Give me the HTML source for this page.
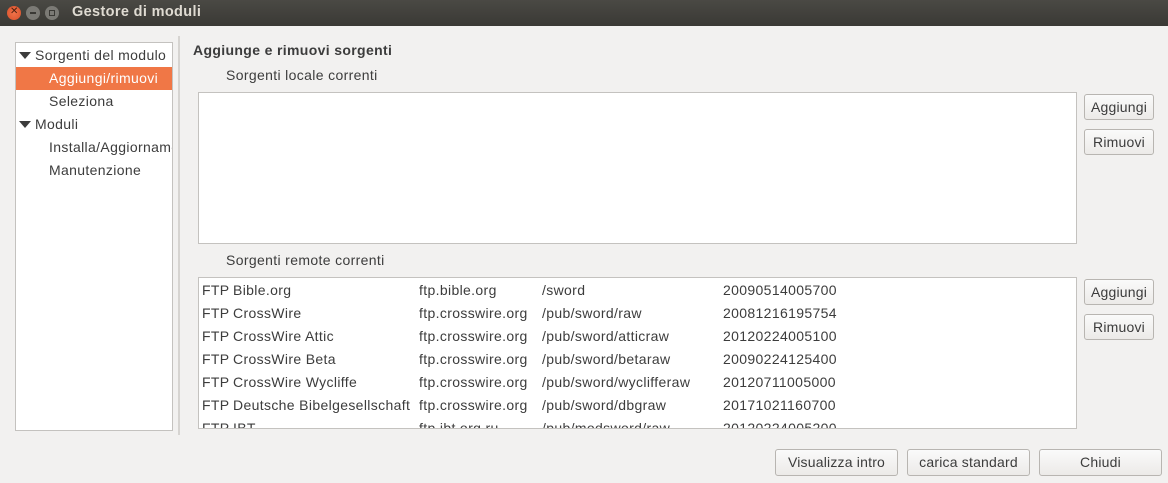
<!DOCTYPE html>
<html><head><style>
*{margin:0;padding:0;box-sizing:border-box}
body{width:1168px;height:483px;background:#f2f1f0;font-family:"Liberation Sans",sans-serif;font-size:14px;letter-spacing:0.35px;color:#3c3c3c;position:relative;overflow:hidden}
.t{position:absolute;white-space:nowrap}
#title{position:absolute;left:0;top:0;width:1168px;height:26px;background:linear-gradient(#4a4944,#3a3935);}
.wb{position:absolute;top:6px;width:14px;height:14px;border-radius:50%}
.box{position:absolute;background:#fff;border:1px solid #c4c2bf}
.btn{position:absolute;border:1px solid #b8b5b1;border-radius:3px;background:linear-gradient(#fafafa,#eceae8);text-align:center;line-height:24px;color:#3c3c3c;letter-spacing:0.2px}
.row{position:absolute;left:0;height:23px;line-height:23px;white-space:nowrap}
.tri{display:inline-block;width:0;height:0;border-left:6px solid transparent;border-right:6px solid transparent;border-top:7px solid #3c3c3c;margin-right:4px;vertical-align:1px}
</style></head><body>
<div id="title">
<div class="wb" style="left:7px;background:radial-gradient(#f0734a,#d9502a);"><span class="t" style="left:3px;top:0px;font-size:10px;color:#4a2010;letter-spacing:0">✕</span></div>
<div class="wb" style="left:26px;background:#7b7a75;"><span class="t" style="left:4px;top:6px;width:6px;height:2px;background:#3a3935"></span></div>
<div class="wb" style="left:45px;background:#7b7a75;"><span class="t" style="left:4px;top:4px;width:6px;height:6px;border:1px solid #3a3935"></span></div>
<span class="t" style="left:72px;top:4px;color:#dfdbd2;font-weight:bold;font-size:14.5px;">Gestore di moduli</span>
</div>
<div class="box" style="left:15px;top:42px;width:158px;height:389px;overflow:hidden">
<div class="row" style="top:1px;left:3px"><span class="tri"></span>Sorgenti del modulo</div>
<div class="row" style="top:24px;width:158px;background:#f07746;color:#fff;padding-left:33px">Aggiungi/rimuovi</div>
<div class="row" style="top:47px;left:33px">Seleziona</div>
<div class="row" style="top:70px;left:3px"><span class="tri"></span>Moduli</div>
<div class="row" style="top:93px;left:33px">Installa/Aggiornamento</div>
<div class="row" style="top:116px;left:33px">Manutenzione</div>
</div>
<div style="position:absolute;left:178px;top:36px;width:2px;height:399px;background:#d6d4d1"></div>
<span class="t" style="left:193px;top:42px;font-weight:bold">Aggiunge e rimuovi sorgenti</span>
<span class="t" style="left:226px;top:67px">Sorgenti locale correnti</span>
<div class="box" style="left:198px;top:92px;width:879px;height:152px"></div>
<span class="t" style="left:226px;top:252px">Sorgenti remote correnti</span>
<div class="box" style="left:198px;top:277px;width:879px;height:152px;overflow:hidden">
<div style="position:absolute;left:3px;top:1px">
<div class="row" style="top:0">FTP</div><div class="row" style="top:23px">FTP</div><div class="row" style="top:46px">FTP</div><div class="row" style="top:69px">FTP</div><div class="row" style="top:92px">FTP</div><div class="row" style="top:115px">FTP</div><div class="row" style="top:138px">FTP</div>
</div>
<div style="position:absolute;left:34px;top:1px">
<div class="row" style="top:0">Bible.org</div><div class="row" style="top:23px">CrossWire</div><div class="row" style="top:46px">CrossWire Attic</div><div class="row" style="top:69px">CrossWire Beta</div><div class="row" style="top:92px">CrossWire Wycliffe</div><div class="row" style="top:115px">Deutsche Bibelgesellschaft</div><div class="row" style="top:138px">IBT</div>
</div>
<div style="position:absolute;left:220px;top:1px">
<div class="row" style="top:0">ftp.bible.org</div><div class="row" style="top:23px">ftp.crosswire.org</div><div class="row" style="top:46px">ftp.crosswire.org</div><div class="row" style="top:69px">ftp.crosswire.org</div><div class="row" style="top:92px">ftp.crosswire.org</div><div class="row" style="top:115px">ftp.crosswire.org</div><div class="row" style="top:138px">ftp.ibt.org.ru</div>
</div>
<div style="position:absolute;left:343px;top:1px">
<div class="row" style="top:0">/sword</div><div class="row" style="top:23px">/pub/sword/raw</div><div class="row" style="top:46px">/pub/sword/atticraw</div><div class="row" style="top:69px">/pub/sword/betaraw</div><div class="row" style="top:92px">/pub/sword/wyclifferaw</div><div class="row" style="top:115px">/pub/sword/dbgraw</div><div class="row" style="top:138px">/pub/modsword/raw</div>
</div>
<div style="position:absolute;left:524px;top:1px">
<div class="row" style="top:0">20090514005700</div><div class="row" style="top:23px">20081216195754</div><div class="row" style="top:46px">20120224005100</div><div class="row" style="top:69px">20090224125400</div><div class="row" style="top:92px">20120711005000</div><div class="row" style="top:115px">20171021160700</div><div class="row" style="top:138px">20120224005200</div>
</div>
</div>
<div class="btn" style="left:1084px;top:94px;width:70px;height:26px">Aggiungi</div>
<div class="btn" style="left:1084px;top:129px;width:70px;height:26px">Rimuovi</div>
<div class="btn" style="left:1084px;top:279px;width:70px;height:26px">Aggiungi</div>
<div class="btn" style="left:1084px;top:314px;width:70px;height:26px">Rimuovi</div>
<div class="btn" style="left:775px;top:449px;width:123px;height:27px">Visualizza intro</div>
<div class="btn" style="left:907px;top:449px;width:123px;height:27px">carica standard</div>
<div class="btn" style="left:1039px;top:449px;width:123px;height:27px">Chiudi</div>
</body></html>
